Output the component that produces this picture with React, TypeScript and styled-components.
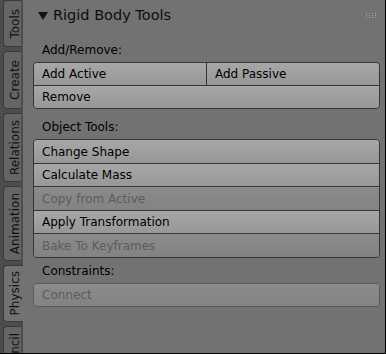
import React from "react";
import styled, { createGlobalStyle } from "styled-components";

type Tab = { label: string; height: number; active?: boolean };

type ButtonItem = { label: string; disabled?: boolean };

const tabs: Tab[] = [
  { label: "Tools", height: 47 },
  { label: "Create", height: 58 },
  { label: "Relations", height: 69 },
  { label: "Animation", height: 75 },
  { label: "Physics", height: 57, active: true },
  { label: "Grease Pencil", height: 96 },
];

const addRemove: ButtonItem[][] = [
  [{ label: "Add Active" }, { label: "Add Passive" }],
  [{ label: "Remove" }],
];

const objectTools: ButtonItem[][] = [
  [{ label: "Change Shape" }],
  [{ label: "Calculate Mass" }],
  [{ label: "Copy from Active", disabled: true }],
  [{ label: "Apply Transformation" }],
  [{ label: "Bake To Keyframes", disabled: true }],
];

const constraints: ButtonItem[][] = [[{ label: "Connect", disabled: true }]];

export default function App() {
  return (
    <>
      <GlobalStyle />
      <Frame>
        <TabColumn>
          {tabs.map((tab) => (
            <TabButton key={tab.label} $height={tab.height} $active={tab.active}>
              <TabLabel>{tab.label}</TabLabel>
            </TabButton>
          ))}
        </TabColumn>

        <Panel>
          <Header>
            <svg width="10" height="8" viewBox="0 0 10 8">
              <polygon points="0,0 10,0 5,8" fill="#141414" />
            </svg>
            <Title>Rigid Body Tools</Title>
            <DragHandle width="10" height="5" viewBox="0 0 10 5">
              {[0, 3, 6, 9].map((x) =>
                [0, 2, 4].map((y) => (
                  <rect key={`${x}-${y}`} x={x} y={y} width="1" height="1" fill="#a4a4a4" />
                ))
              )}
            </DragHandle>
          </Header>

          <Content>
            <SectionLabel $top={17.6}>Add/Remove:</SectionLabel>
            <ButtonStack rows={addRemove} rowHeight={22} />

            <SectionLabel $top={11.8}>Object Tools:</SectionLabel>
            <ButtonStack rows={objectTools} rowHeight={22.5} />

            <SectionLabel $top={6.5}>Constraints:</SectionLabel>
            <ButtonStack rows={constraints} rowHeight={22} dim />
          </Content>
        </Panel>
      </Frame>
    </>
  );
}

function ButtonStack(props: { rows: ButtonItem[][]; rowHeight: number; dim?: boolean }) {
  return (
    <Group $dim={props.dim}>
      {props.rows.map((row, i) => (
        <Row key={i} $height={props.rowHeight}>
          {row.map((item) => (
            <Button key={item.label} $disabled={item.disabled}>
              {item.label}
            </Button>
          ))}
        </Row>
      ))}
    </Group>
  );
}

const GlobalStyle = createGlobalStyle`
  html, body {
    margin: 0;
    padding: 0;
    background: #727272;
    overflow: hidden;
  }
  body {
    font-family: "DejaVu Sans", "Liberation Sans", sans-serif;
  }
`;

const Frame = styled.div`
  width: 386px;
  height: 354px;
  box-sizing: border-box;
  display: flex;
  overflow: hidden;
  border-right: 1px solid #000;
  border-bottom: 1px solid #000;
  background: #727272;
`;

const TabColumn = styled.div`
  width: 23px;
  flex-shrink: 0;
  display: flex;
  flex-direction: column;
  gap: 4px;
  padding-left: 3px;
  box-sizing: border-box;
  background: #4c4c4c;
  overflow: hidden;
`;

const TabButton = styled.div<{ $height: number; $active?: boolean }>`
  flex-shrink: 0;
  height: ${(p) => p.$height}px;
  width: ${(p) => (p.$active ? 20 : 18)}px;
  box-sizing: border-box;
  display: flex;
  align-items: center;
  padding-left: 4px;
  border: 1px solid #3a3a3a;
  border-right: none;
  border-radius: 4px 0 0 4px;
  background: ${(p) => (p.$active ? "#727272" : "#656565")};
  color: #111;
`;

const TabLabel = styled.span`
  writing-mode: vertical-rl;
  transform: rotate(180deg);
  font-size: 12px;
  line-height: 14px;
  white-space: nowrap;
`;

const Panel = styled.div`
  flex: 1;
  display: flex;
  flex-direction: column;
  background: #727272;
`;

const Header = styled.div`
  display: flex;
  align-items: center;
  height: 19px;
  margin-top: 6px;
  padding: 0 9px 0 15px;
`;

const Title = styled.span`
  margin-left: 5px;
  font-size: 14.5px;
  line-height: 19px;
  color: #0e0e0e;
`;

const DragHandle = styled.svg`
  margin-left: auto;
`;

const Content = styled.div`
  display: flex;
  flex-direction: column;
  padding: 0 5px 0 10px;
`;

const SectionLabel = styled.div<{ $top: number }>`
  margin-top: ${(p) => p.$top}px;
  margin-bottom: 5px;
  padding-left: 9px;
  height: 14px;
  font-size: 12px;
  line-height: 14px;
  color: #000;
`;

const Group = styled.div<{ $dim?: boolean }>`
  display: flex;
  flex-direction: column;
  border: 1px solid ${(p) => (p.$dim ? "#5a5a5a" : "#363636")};
  border-radius: 4px;
  overflow: hidden;
`;

const Row = styled.div<{ $height: number }>`
  display: flex;
  height: ${(p) => p.$height}px;
  & + & {
    border-top: 1px solid #363636;
  }
`;

const Button = styled.div<{ $disabled?: boolean }>`
  flex: 1;
  display: flex;
  align-items: center;
  padding-left: 8px;
  font-size: 12px;
  color: ${(p) => (p.$disabled ? "#5c5c5c" : "#000")};
  background: ${(p) =>
    p.$disabled
      ? "linear-gradient(#8b8b8b, #838383)"
      : "linear-gradient(#a7a7a7, #979797)"};
  & + & {
    border-left: 1px solid #363636;
  }
`;
